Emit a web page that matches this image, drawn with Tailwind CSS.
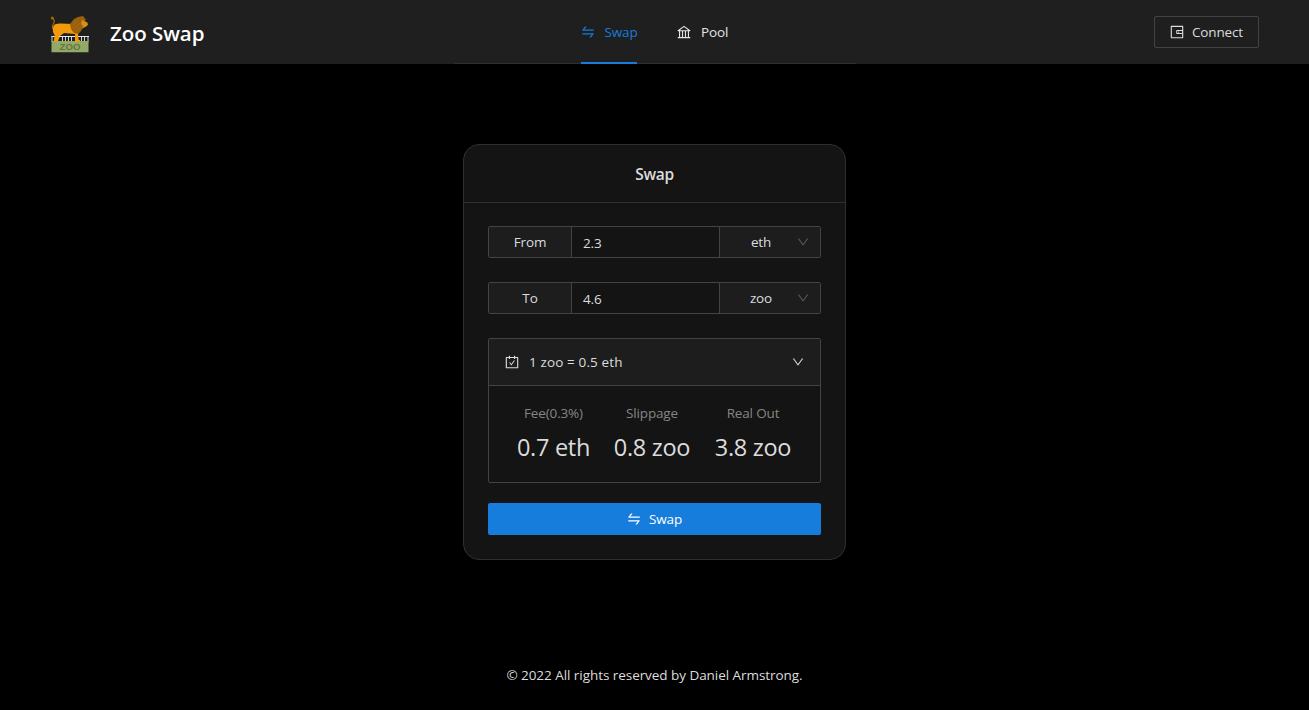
<!DOCTYPE html>
<html lang="en">
<head>
<meta charset="utf-8">
<title>Zoo Swap</title>
<script src="https://cdn.jsdelivr.net/npm/@tailwindcss/browser@4"></script>
</head>
<body class="bg-black">
<svg class="hidden">
  <symbol id="swap" viewBox="64 64 896 896"><path d="M847.9 592H152c-4.400 0-8 3.600-8 8v60c0 4.400 3.600 8 8 8h605.200L612.900 851c-4.100 5.200-.4 13 6.300 13h72.500c4.900 0 9.500-2.200 12.600-6.100l168.800-214.100c16.500-21 1.600-51.800-25.200-51.800zM872 356H266.800l144.300-183c4.100-5.200.4-13-6.300-13h-72.500c-4.900 0-9.500 2.200-12.600 6.100L150.900 380.200c-16.500 21-1.600 51.800 25.100 51.800h696c4.400 0 8-3.600 8-8v-60c0-4.400-3.600-8-8-8z"/></symbol>
  <symbol id="bank" viewBox="64 64 896 896"><path d="M894 462c30.900 0 43.800-39.700 18.700-58L530.800 126.200a31.810 31.810 0 0 0-37.600 0L111.300 404c-25.100 18.200-12.200 58 18.800 58H192v374h-72c-4.400 0-8 3.600-8 8v52c0 4.400 3.600 8 8 8h784c4.400 0 8-3.600 8-8v-52c0-4.400-3.600-8-8-8h-72V462h62zM512 196.700l271.100 197.200H240.900L512 196.700zM264 462h117v374H264V462zm189 0h117v374H453V462zm307 374H642V462h118v374z"/></symbol>
  <symbol id="wallet" viewBox="64 64 896 896"><path d="M880 112H144c-17.700 0-32 14.300-32 32v736c0 17.700 14.300 32 32 32h736c17.700 0 32-14.300 32-32V144c0-17.700-14.300-32-32-32zm-40 464H528V448h312v128zm0 264H184V184h656v200H496c-17.700 0-32 14.300-32 32v192c0 17.700 14.300 32 32 32h344v200zM580 512a40 40 0 1 0 80 0 40 40 0 1 0-80 0z"/></symbol>
  <symbol id="down" viewBox="64 64 896 896"><path d="M884 256h-75c-5.100 0-9.900 2.500-12.900 6.600L512 654.200 227.900 262.600c-3-4.100-7.800-6.600-12.900-6.600h-75c-6.500 0-10.300 7.400-6.500 12.700l352.600 486.100c12.800 17.600 39 17.600 51.700 0l352.600-486.100c3.900-5.300.1-12.700-6.400-12.700z"/></symbol>
  <symbol id="carry" viewBox="64 64 896 896"><path d="M880 184H712v-64c0-4.400-3.600-8-8-8h-56c-4.400 0-8 3.600-8 8v64H384v-64c0-4.400-3.600-8-8-8h-56c-4.400 0-8 3.600-8 8v64H144c-17.700 0-32 14.300-32 32v664c0 17.700 14.300 32 32 32h736c17.700 0 32-14.300 32-32V216c0-17.700-14.300-32-32-32zm-40 656H184V256h128v48c0 4.400 3.600 8 8 8h56c4.400 0 8-3.600 8-8v-48h256v48c0 4.400 3.600 8 8 8h56c4.400 0 8-3.600 8-8v-48h128v584zM688 420h-55.200c-5.100 0-10 2.500-13 6.600L468.900 634.400l-64.700-89c-3-4.100-7.800-6.600-13-6.600H336c-6.500 0-10.300 7.400-6.500 12.700l126.600 174.200a16.100 16.100 0 0 0 26 0l212.600-292.700c3.800-5.300 0-12.600-6.700-12.600z"/></symbol>
</svg>
<div class="flex h-[710px] w-[1309px] flex-col overflow-hidden bg-black font-['Open_Sans','Noto_Sans',sans-serif] text-[13.5px] leading-[22px] tracking-[-0.15px] whitespace-nowrap text-[#dcdcdc]">
  <header class="grid h-16 shrink-0 grid-cols-[404px_402px_403px] bg-[#1f1f1f] px-[50px]">
    <div class="flex items-center pt-1">
      <svg class="mr-[20px] h-10 w-10" viewBox="0 0 40 40">
        <path d="M5 17C2.500 15 2 12 3.500 9.500C5 7.500 4.500 5.500 2.500 5" fill="none" stroke="#a5680a" stroke-width="1.200"/>
        <circle cx="2.300" cy="4" r="1.500" fill="#a5680a"/>
        <path d="M4 11Q6 9 11 9.500L22 10L29 7L36 9L37 12L33 14L29 17L28 21L28 26H30V28H25V20L14 19L10 22L8 27H4L5 22L3 18Q2 14 4 11Z" fill="#f09a0c"/>
        <path d="M20 10L24 5L28 3L33 2L36 6L33 8L33 13L31 17L28 20L24 19L21 15Z" fill="#9a610c"/>
        <path d="M32 6L37.500 8.500L38 11L34 13L31 10Z" fill="#d98d14"/>
        <path d="M24 15L30 9M25 18L32 12M23 11L28 7" stroke="#b06e0c" stroke-width=".7"/>
        <path d="M1.500 22.500H39" stroke="#e5e5e5" stroke-width="1.200"/>
        <path d="M2 22V28M12.500 23V28M15.500 23V28M18.500 23V28M21.500 23V28M31.500 23V28M34.500 23V28M38 23V28" stroke="#d4d4d4" stroke-width="1"/>
        <path d="M1.500 27H38.500V38.300H1.500Z" fill="#93a968"/>
        <path d="M5 21L3.500 28H7L9.500 22ZM25 20V28H29L28 21Z" fill="#f09a0c"/>
        <text x="20" y="36" text-anchor="middle" textLength="21" lengthAdjust="spacingAndGlyphs" font-family="Liberation Sans" font-weight="bold" font-size="9.500" letter-spacing="0" fill="#66753f">ZOO</text>
      </svg>
      <span class="pb-[2px] text-[20.5px] font-semibold tracking-[-0.05px] text-white">Zoo Swap</span>
    </div>
    <nav class="flex justify-center gap-10 border-b border-[#303030]">
      <div class="-mb-px flex w-14 items-center border-b-2 border-[#177ddc] pt-[2px] text-[#177ddc]"><svg class="mr-[9.5px] size-[14px] shrink-0 fill-current"><use href="#swap"/></svg>Swap</div>
      <div class="-mb-px flex w-[52px] items-center border-b-2 border-transparent pt-[2px] text-[#e4e4e4]"><svg class="mr-[10px] size-[14px] shrink-0 fill-current"><use href="#bank"/></svg>Pool</div>
    </nav>
    <div class="flex items-center justify-end">
      <button class="flex h-8 w-[105px] items-center rounded-[2px] border border-[#434343] pl-[15px]"><svg class="mr-[8px] size-[14px] shrink-0 fill-current"><use href="#wallet"/></svg>Connect</button>
    </div>
  </header>
  <main class="mx-auto mt-20 h-[416px] w-[383px] shrink-0 rounded-[16px] border border-[#303030] bg-[#141414]">
    <h1 class="flex h-[58px] items-center justify-center border-b border-[#303030] pt-px text-[15.5px] font-semibold tracking-[-0.3px]">Swap</h1>
    <div class="flex flex-col px-6 pt-[23px]">
      <div class="mb-6 flex h-8 rounded-[2px] border border-[#434343]">
        <div class="flex w-[83px] items-center justify-center border-r border-[#434343] bg-[#1d1d1d]">From</div>
        <div class="flex w-[148px] items-center border-r border-[#434343] pt-px pl-[11px]">2.3</div>
        <div class="flex flex-1 items-center bg-[#1d1d1d] pr-[11px]"><span class="flex-1 pl-[5px] text-center">eth</span><svg class="size-3 fill-[#5a5a5a]"><use href="#down"/></svg></div>
      </div>
      <div class="mb-6 flex h-8 rounded-[2px] border border-[#434343]">
        <div class="flex w-[83px] items-center justify-center border-r border-[#434343] bg-[#1d1d1d]">To</div>
        <div class="flex w-[148px] items-center border-r border-[#434343] pt-px pl-[11px]">4.6</div>
        <div class="flex flex-1 items-center bg-[#1d1d1d] pr-[11px]"><span class="flex-1 pl-[5px] text-center">zoo</span><svg class="size-3 fill-[#5a5a5a]"><use href="#down"/></svg></div>
      </div>
      <section class="mb-5 h-[145px] rounded-[2px] border border-[#434343]">
        <div class="flex h-[47px] items-center border-b border-[#434343] bg-[#1d1d1d] pr-4 pl-4"><svg class="mr-[10px] size-[14px] fill-current"><use href="#carry"/></svg><span class="flex-1 tracking-[0.13px]">1 zoo = 0.5 eth</span><svg class="size-3 fill-current"><use href="#down"/></svg></div>
        <div class="grid grid-cols-[72px_77px_77px] justify-center gap-6 pt-4 text-center">
          <div class="flex flex-col items-center"><span class="text-[#858585]">Fee(0.3%)</span><span class="mt-[4px] text-[23.5px] leading-[38px] tracking-[-0.3px]">0.7 eth</span></div>
          <div class="flex flex-col items-center"><span class="text-[#858585]">Slippage</span><span class="mt-[4px] text-[23.5px] leading-[38px] tracking-[-0.3px]">0.8 zoo</span></div>
          <div class="flex flex-col items-center"><span class="text-[#858585]">Real Out</span><span class="mt-[4px] text-[23.5px] leading-[38px] tracking-[-0.3px]">3.8 zoo</span></div>
        </div>
      </section>
      <button class="flex h-8 items-center justify-center rounded-[2px] bg-[#177ddc] text-white"><svg class="mr-[8px] size-[14px] fill-current"><use href="#swap"/></svg>Swap</button>
    </div>
  </main>
  <footer class="mt-[104px] text-center tracking-[-0.05px]">© 2022 All rights reserved by Daniel Armstrong.</footer>
</div>
</body>
</html>
